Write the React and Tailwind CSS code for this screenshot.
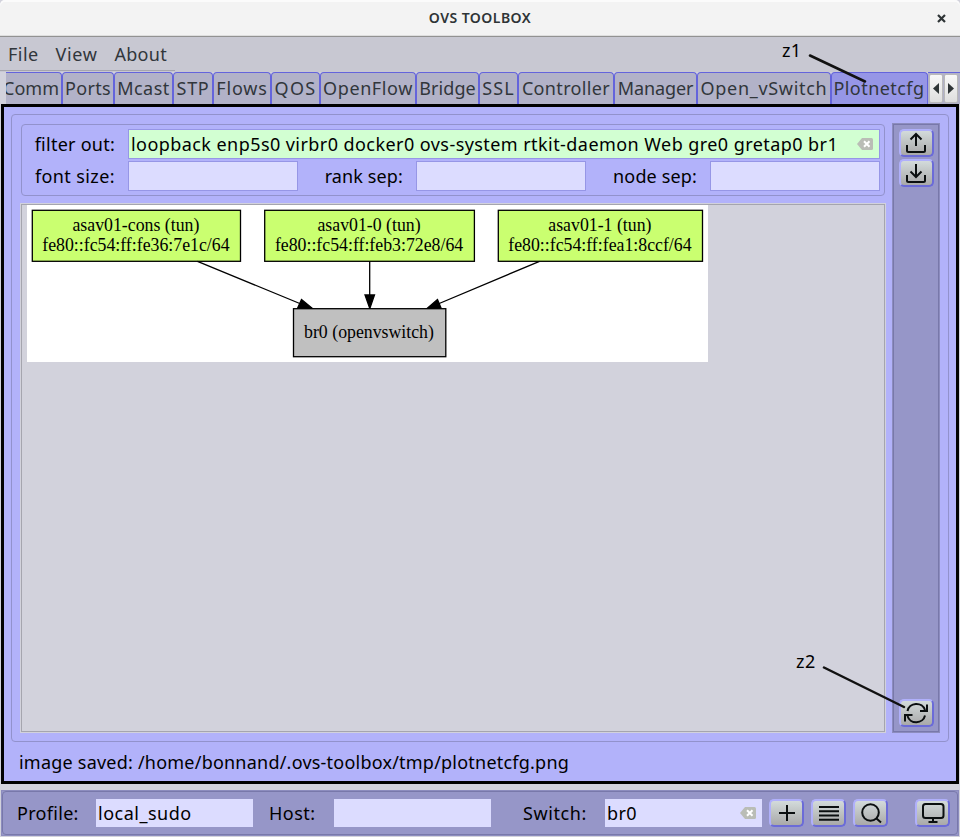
import React from "react";

const tabs = [
  ["Ports", "w-[52px] tracking-[0.3px]"],
  ["Mcast", "w-[59px] tracking-[0.5px]"],
  ["STP", "w-[40px] tracking-[0.7px]"],
  ["Flows", "w-[58px] tracking-[0.8px]"],
  ["QOS", "w-[49px] tracking-[1.3px]"],
  ["OpenFlow", "w-[96px] tracking-[0.6px]"],
  ["Bridge", "w-[63px] tracking-[0.1px]"],
  ["SSL", "w-[39px] tracking-[1.1px]"],
  ["Controller", "w-[96px] tracking-[0.35px]"],
  ["Manager", "w-[83px] tracking-[-0.1px]"],
  ["Open_vSwitch", "w-[134px] tracking-[0.7px]"],
];

function Tab({ children, className, active }) {
  return (
    <div
      className={`flex h-8 shrink-0 justify-center whitespace-pre rounded-t-[4px] border-x border-t border-[#6464dc] leading-[30px] text-[#31363b] ${
        active ? "bg-[#9696e6]" : "bg-[#b2b2c8]"
      } ${className}`}
    >
      {children}
    </div>
  );
}

function ToolButton({ children }) {
  return (
    <button className="flex h-[28px] w-[35px] shrink-0 items-center justify-center rounded-[5px] border-2 border-t-[#b0b0fb] border-l-[#b0b0fb] border-r-[#6b6bd8] border-b-[#6b6bd8] bg-linear-to-b from-[#d3dbdb] to-[#a9a9a9]">
      <svg width="26" height="24" viewBox="0 0 26 24" fill="none" stroke="#0b0f10" strokeWidth="2" className="shrink-0">
        {children}
      </svg>
    </button>
  );
}

function ClearMark({ className }) {
  return (
    <svg width="16" height="12" viewBox="0 0 16 12" className={className}>
      <path d="M0 6 5 0H14.5Q16 0 16 1.5V10.5Q16 12 14.5 12H5Z" fill="#babdb6" />
      <path d="m7 3.2 5.5 5.5M12.500 3.200 7 8.700" stroke="#fff" strokeWidth="2" />
    </svg>
  );
}

const field = "h-[30px] shrink-0 border border-[#9696e6] bg-[#dcdcff]";
const bottomField = "flex h-[28px] w-[157px] shrink-0 items-center bg-[#dcdcff] pl-[2px]";

function GraphNode({ x, w, title, addr }) {
  return (
    <g>
      <rect x={x} y="210.300" width={w} height="51" fill="#caff70" stroke="#000" strokeWidth="1.300" />
      <text x={x + w / 2 - 0.5} y="231">{title}</text>
      <text x={x + w / 2 - 0.5} y="251">{addr}</text>
    </g>
  );
}

function Graph() {
  return (
    <svg width="681" height="157" viewBox="27 205 681 157" className="block bg-white" fontFamily="Liberation Serif, serif" fontSize="17.800" textAnchor="middle">
      <GraphNode x={32.300} w={208.200} title="asav01-cons (tun)" addr="fe80::fc54:ff:fe36:7e1c/64" />
      <GraphNode x={264.700} w={209.700} title="asav01-0 (tun)" addr="fe80::fc54:ff:feb3:72e8/64" />
      <GraphNode x={498.300} w={204.200} title="asav01-1 (tun)" addr="fe80::fc54:ff:fea1:8ccf/64" />
      <g stroke="#000" strokeWidth="1.300">
        <path d="M197.500 261.300 301 304M369.700 261.300V296M539.500 261.300 438 304" fill="none" />
        <path d="m301.500 299.500 11 9-14.800-.5zM365 295h9.500l-4.700 13.500zM437.500 299.500l-10.500 9 14-.5z" />
      </g>
      <rect x="293.500" y="308.700" width="152.300" height="48" fill="#c0c0c0" stroke="#000" strokeWidth="1.300" />
      <text x="369" y="338">br0 (openvswitch)</text>
    </svg>
  );
}

export default function App() {
  return (
    <div className="relative flex h-[837px] w-[960px] flex-col overflow-hidden bg-[#d2d2dc] font-['Noto_Sans',sans-serif] text-[18px] text-black">
      <header className="flex h-[37px] shrink-0 items-center rounded-t-[5px] border-b border-[#929292] bg-[#f3f3f3] shadow-[inset_0_-1px_0_#dedede,inset_0_2px_0_#fbfbfb]">
        <div className="w-[960px] pb-[2px] text-center text-[14px] font-semibold tracking-[0.45px] text-[#2e3436]">OVS TOOLBOX</div>
        <svg width="9" height="9" viewBox="0 0 9 9" className="-ml-[23px] shrink-0">
          <path d="m1 1 7 7M8 1 1 8" stroke="#2e3436" strokeWidth="2.200" />
        </svg>
      </header>

      <nav className="flex h-[35px] shrink-0 bg-[#c8c8d2] text-[#31363b]">
        <div className="flex h-[34px] w-[175px] items-center gap-[17px] border-b border-[#a5a5ae] pt-[2px] pl-2">
          <span className="tracking-[0.45px]">File</span>
          <span className="tracking-[0.6px]">View</span>
          <span className="tracking-[0.3px]">About</span>
        </div>
      </nav>

      <div className="flex h-8 shrink-0 pl-[6px]">
        <div className="flex h-8 w-[56px] shrink-0 justify-end overflow-hidden whitespace-pre rounded-tr-[4px] border-r border-t border-[#6464dc] bg-[#b2b2c8] pr-[2px] leading-[30px] text-[#31363b]">
          Comm
        </div>
        {tabs.map(([name, cls]) => (
          <Tab key={name} className={cls}>{name}</Tab>
        ))}
        <Tab active className="w-[97px] pr-[1px] tracking-[0.45px]">Plotnetcfg</Tab>
        <div className="flex h-8 grow gap-px border-t border-[#6464dc] bg-[#b2b2c8] pt-px pl-px">
          {["M9 4v11L3 9.500z", "M3 4v11l6-5.500z"].map((d) => (
            <div key={d} className="flex h-[29px] w-[14px] items-center justify-center rounded-[2px] border border-[#b9b9b9] bg-linear-to-b from-[#f8f8f8] to-[#dedede]">
              <svg width="12" height="19" viewBox="0 0 12 19" className="shrink-0">
                <path d={d} fill="#2e3436" />
              </svg>
            </div>
          ))}
        </div>
      </div>

      <main className="mx-px flex h-[680px] shrink-0 flex-col border-[3px] border-black bg-[#b2b2fa] pt-[7px] pl-[7px]">
        <section className="flex h-[628px] w-[938px] shrink-0 rounded-[4px] border border-[#9292cc] pt-2 pl-2">
          <div className="flex w-[866px] shrink-0 flex-col">
            <div className="mt-px ml-px flex h-[72px] w-[864px] shrink-0 flex-col gap-[2px] rounded-[4px] border border-[#9292cc] pt-1">
              <div className="flex items-center">
                <span className="w-[93px] text-right tracking-[0.25px]">filter out:</span>
                <div className="ml-[13px] flex h-[30px] w-[752px] items-center border border-[#9696e6] bg-[#d2ffd2] pl-[2px]">
                  <span className="w-[726px] whitespace-pre tracking-[0.435px]">loopback enp5s0 virbr0 docker0 ovs-system rtkit-daemon Web gre0 gretap0 br1</span>
                  <ClearMark className="shrink-0" />
                </div>
              </div>
              <div className="flex items-center">
                <span className="w-[93px] shrink-0 text-right tracking-[0.4px]">font size:</span>
                <div className={`${field} ml-[13px] w-[170px]`} />
                <span className="w-[105px] shrink-0 text-right tracking-[0.12px]">rank sep:</span>
                <div className={`${field} ml-[13px] w-[170px]`} />
                <span className="w-[111px] shrink-0 text-right tracking-[0.15px]">node sep:</span>
                <div className={`${field} ml-[13px] w-[170px]`} />
              </div>
            </div>
            <div className="mt-[7px] h-[530px] w-[866px] shrink-0 border border-[#d2d2dc] bg-[#d2d2dc]">
              <div className="h-[528px] border border-[#a5a5ae] pl-[5px]">
                <Graph />
              </div>
            </div>
          </div>
          <aside className="ml-[6px] flex h-[610px] w-[48px] shrink-0 border border-[#8c8cbe] bg-[#9696c8]">
            <div className="flex w-[46px] flex-col items-center justify-between border border-[#7878aa] pt-1 pb-1">
              <div className="flex flex-col gap-[2px]">
                <ToolButton><path d="M13 15V3.500M7.500 8.500 13 3l5.500 5.500M4 14v5.500Q4 21 5.500 21h15q1.500 0 1.500-1.500V14" /></ToolButton>
                <ToolButton><path d="M13 3v12.500M7.500 10.500 13 16l5.500-5.500M4 14v5.500Q4 21 5.500 21h15q1.500 0 1.500-1.500V14" /></ToolButton>
              </div>
              <ToolButton><path d="M4.500 10A9 8.500 0 0 1 22 9M24 3.500V10h-7M22 14.500A9 8.500 0 0 1 4.500 15M2 20.500V14h7.500" /></ToolButton>
            </div>
          </aside>
        </section>
        <p className="ml-2 flex h-[41px] items-center pt-[2px] tracking-[0.22px]">image saved: /home/bonnand/.ovs-toolbox/tmp/plotnetcfg.png</p>
      </main>

      <footer className="mx-px mt-[6px] h-[46px] shrink-0 border border-[#8c8cbe] bg-[#9696c8]">
        <div className="flex h-[44px] items-center rounded-[4px] border border-[#7878aa] pl-[14px]">
          <span className="w-[79px] shrink-0 tracking-[0.3px]">Profile:</span>
          <div className={`${bottomField} tracking-[0.5px]`}>local_sudo</div>
          <span className="ml-[16px] w-[65px] shrink-0 tracking-[0.5px]">Host:</span>
          <div className={bottomField} />
          <span className="ml-[32px] w-[82px] shrink-0 tracking-[0.6px]">Switch:</span>
          <div className={bottomField}>
            <span className="w-[133px] tracking-[0.4px]">br0</span>
            <ClearMark className="shrink-0" />
          </div>
          <div className="ml-[7px] flex gap-[7px]">
            <ToolButton><path d="M13 4v16M5 12h16" /></ToolButton>
            <ToolButton><path d="M3 6h20M3 10.300h20M3 14.500h20M3 18.700h20" /></ToolButton>
            <ToolButton><circle cx="12.500" cy="11.500" r="8.300" /><path d="m18.500 17.500 4.500 4" /></ToolButton>
          </div>
          <div className="ml-[27px] flex">
            <ToolButton><rect x="3" y="3" width="20.500" height="14" rx="2.500" /><path d="M13 17v4M8.500 21h9" /></ToolButton>
          </div>
        </div>
      </footer>

      <span className="absolute top-[38px] left-[782px] leading-6 tracking-[0.3px]">z1</span>
      <span className="absolute top-[649px] left-[796px] leading-6 tracking-[0.5px]">z2</span>
      <svg className="absolute top-0 left-0" width="960" height="837" viewBox="0 0 960 837" stroke="#111" strokeWidth="2.500" strokeLinecap="round">
        <path d="m810 55.500 55 26M824 667.500l80 39.500" />
      </svg>
    </div>
  );
}
